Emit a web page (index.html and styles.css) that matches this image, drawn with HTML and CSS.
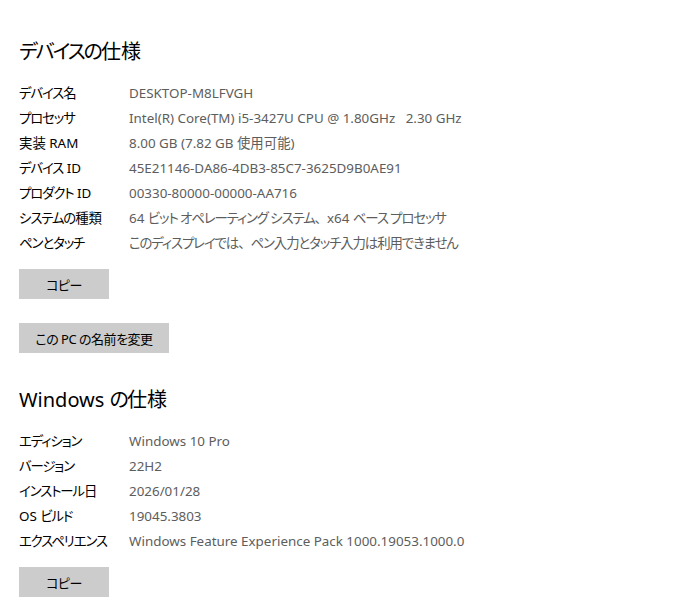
FILE: index.html
```html
<!DOCTYPE html>
<html lang="ja">
<head>
<meta charset="utf-8">
<link rel="stylesheet" href="styles.css">
</head>
<body>
<main class="page">
  <section class="section">
    <h2 class="title"><span class="kana">デバイスの</span>仕様</h2>
    <dl class="specs">
      <div class="row"><dt><span class="kana">デバイス</span>名</dt><dd>DESKTOP-M8LFVGH</dd></div>
      <div class="row"><dt><span class="kana">プロセッサ</span></dt><dd>Intel(R) Core(TM) i5-3427U CPU @ 1.80GHz&nbsp;&nbsp; 2.30 GHz</dd></div>
      <div class="row"><dt>実装 RAM</dt><dd>8.00 GB (7.82 GB 使用可能)</dd></div>
      <div class="row"><dt><span class="kana">デバイス</span> ID</dt><dd>45E21146-DA86-4DB3-85C7-3625D9B0AE91</dd></div>
      <div class="row"><dt><span class="kana">プロダクト</span> ID</dt><dd>00330-80000-00000-AA716</dd></div>
      <div class="row"><dt><span class="kana">システムの</span>種類</dt><dd>64 <span class="kana">ビット オペレーティング システム</span><span class="punct">、</span>x64 <span class="kana">ベース プロセッサ</span></dd></div>
      <div class="row"><dt><span class="kana">ペンとタッチ</span></dt><dd><span class="kana">このディスプレイでは</span><span class="punct">、</span><span class="kana">ペン入力とタッチ入力は利用できません</span></dd></div>
    </dl>
    <div class="actions">
      <button class="btn btn-copy">コピー</button>
      <button class="btn btn-rename">この PC の名前を変更</button>
    </div>
  </section>
  <section class="section section-win">
    <h2 class="title">Windows <span class="kana">の</span>仕様</h2>
    <dl class="specs">
      <div class="row"><dt><span class="kana">エディション</span></dt><dd>Windows 10 Pro</dd></div>
      <div class="row"><dt><span class="kana">バージョン</span></dt><dd>22H2</dd></div>
      <div class="row"><dt><span class="kana">インストール</span>日</dt><dd>2026/01/28</dd></div>
      <div class="row"><dt>OS <span class="kana">ビルド</span></dt><dd>19045.3803</dd></div>
      <div class="row"><dt><span class="kana">エクスペリエンス</span></dt><dd>Windows Feature Experience Pack 1000.19053.1000.0</dd></div>
    </dl>
    <div class="actions">
      <button class="btn btn-copy">コピー</button>
    </div>
  </section>
</main>
</body>
</html>
```
FILE: styles.css
```css
html, body {
  margin: 0;
  padding: 0;
  background: #ffffff;
}
body {
  font-family: "Noto Sans", "Noto Sans CJK JP", sans-serif;
  font-feature-settings: "palt";
  color: #000000;
  overflow: hidden;
}
.page {
  padding: 38px 0 0 19px;
}
.title {
  margin: 0;
  font-size: 20px;
  font-weight: 400;
  line-height: 28px;
  color: #000;
}
.title .kana {
  letter-spacing: -2px;
}
.specs {
  margin: 15px 0 0 0;
  padding: 0;
}
.row {
  display: flex;
  height: 25px;
  line-height: 25px;
  font-size: 13.4px;
}
.row .kana {
  letter-spacing: -1.1px;
}
.row .punct {
  font-feature-settings: normal;
  letter-spacing: -1px;
}
.row dt {
  width: 110px;
  flex: none;
  color: #000;
}
.row dd {
  margin: 0;
  color: #5d5d5d;
  white-space: nowrap;
}
.actions {
  display: flex;
  flex-direction: column;
  align-items: flex-start;
  gap: 24px;
  margin-top: 13px;
}
.btn {
  font-family: inherit;
  font-feature-settings: "palt";
  font-size: 13px;
  letter-spacing: -0.5px;
  color: #000;
  background: #cccccc;
  border: none;
  border-radius: 0;
  height: 30px;
  padding: 0;
  margin: 0;
}
.btn-copy {
  width: 90px;
}
.btn-rename {
  width: 150px;
}
.section-win {
  margin-top: 33px;
}
```
